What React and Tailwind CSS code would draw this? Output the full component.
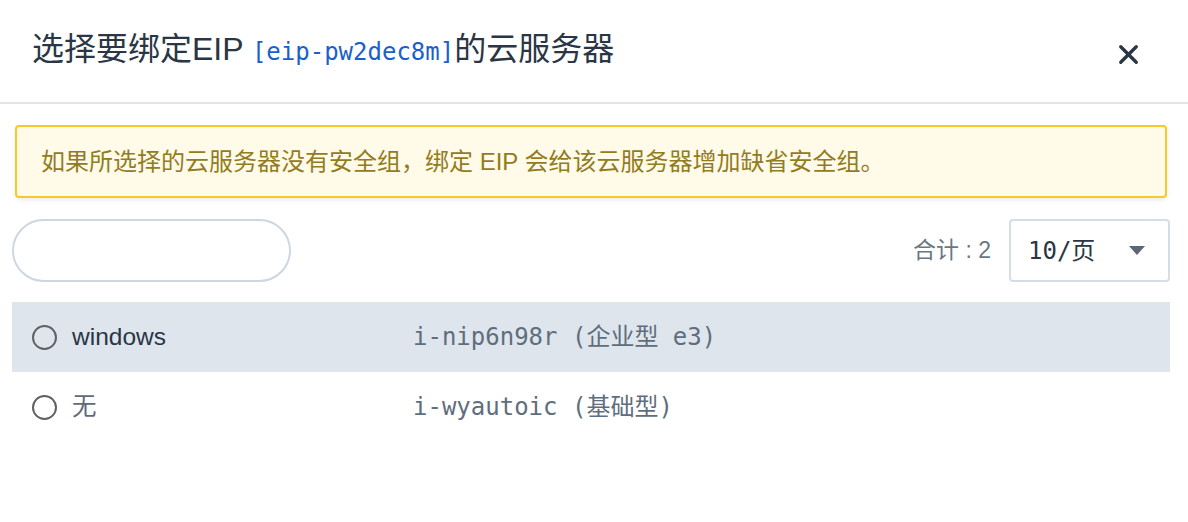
import { X } from 'lucide-react';

const sans = 'font-["Liberation_Sans","Noto_Sans_CJK_SC",sans-serif]';
const mono = 'font-["DejaVu_Sans_Mono","Noto_Sans_CJK_SC",monospace]';

const rows = [
  { name: 'windows', id: 'i-nip6n98r (企业型 e3)', active: true },
  { name: '无', id: 'i-wyautoic (基础型)', active: false },
];

export default function App() {
  return (
    <div className={`w-full h-[522px] bg-white ${sans}`}>
      {/* Header */}
      <div className="h-[104px] flex items-start justify-between border-b-2 border-[#dde4ec] pl-[32px] pr-[44px]">
        <h2 className="mt-[29px] text-[32px] leading-[40px] text-[#2a3645]">
          选择要绑定EIP{' '}
          <span className={`${mono} text-[24px] text-[#1b5fcc]`}>
            [eip-pw2dec8m]
          </span>
          的云服务器
        </h2>
        <button className="mt-[39px] text-[#2a3645]">
          <X size={31} strokeWidth={2.6} />
        </button>
      </div>

      <div className="pl-[12px] pr-[18px]">
        {/* Notice */}
        <div className="mt-[21px] mx-[3px] h-[73px] flex items-center px-[24px] bg-[#fffbe8] border-2 border-[#f8c928] rounded-[4px] shadow-[0_2px_4px_rgba(0,0,0,0.08)]">
          <p className="text-[24px] text-[#937c1e]">
            如果所选择的云服务器没有安全组，绑定 EIP 会给该云服务器增加缺省安全组。
          </p>
        </div>

        {/* Toolbar */}
        <div className="mt-[21px] flex items-center justify-between">
          <input
            type="text"
            className="w-[279px] h-[63px] rounded-full border-2 border-[#cdd6e1] px-[24px] text-[24px] outline-none"
          />
          <div className="flex items-center gap-[18px]">
            <span className="text-[23px] text-[#6b7785]">合计 : 2</span>
            <div className="w-[161px] h-[63px] flex items-center justify-between pl-[17px] pr-[23px] border-2 border-[#d5dde6] rounded-[4px]">
              <span className={`${mono} text-[24px] text-[#2a3645]`}>10/页</span>
              <svg width="16" height="9" viewBox="0 0 16 9">
                <path d="M0 0 H16 L8 9 Z" fill="#5b6776" />
              </svg>
            </div>
          </div>
        </div>

        {/* List */}
        <div className="mt-[20px]">
          {rows.map((r) => (
            <div
              key={r.id}
              className={`h-[70px] flex items-center pl-[20px] ${
                r.active ? 'bg-[#dee5ec]' : 'bg-white'
              }`}
            >
              <span className="w-[25px] h-[25px] rounded-full border-[2.5px] border-[#5f6166] shrink-0" />
              <span
                className={`ml-[15px] w-[341px] text-[24.5px] ${
                  r.active ? 'text-[#2a3645]' : 'text-[#5f6b7a]'
                }`}
              >
                {r.name}
              </span>
              <span className={`${mono} text-[24px] text-[#5f6e7e]`}>{r.id}</span>
            </div>
          ))}
        </div>
      </div>
    </div>
  );
}
